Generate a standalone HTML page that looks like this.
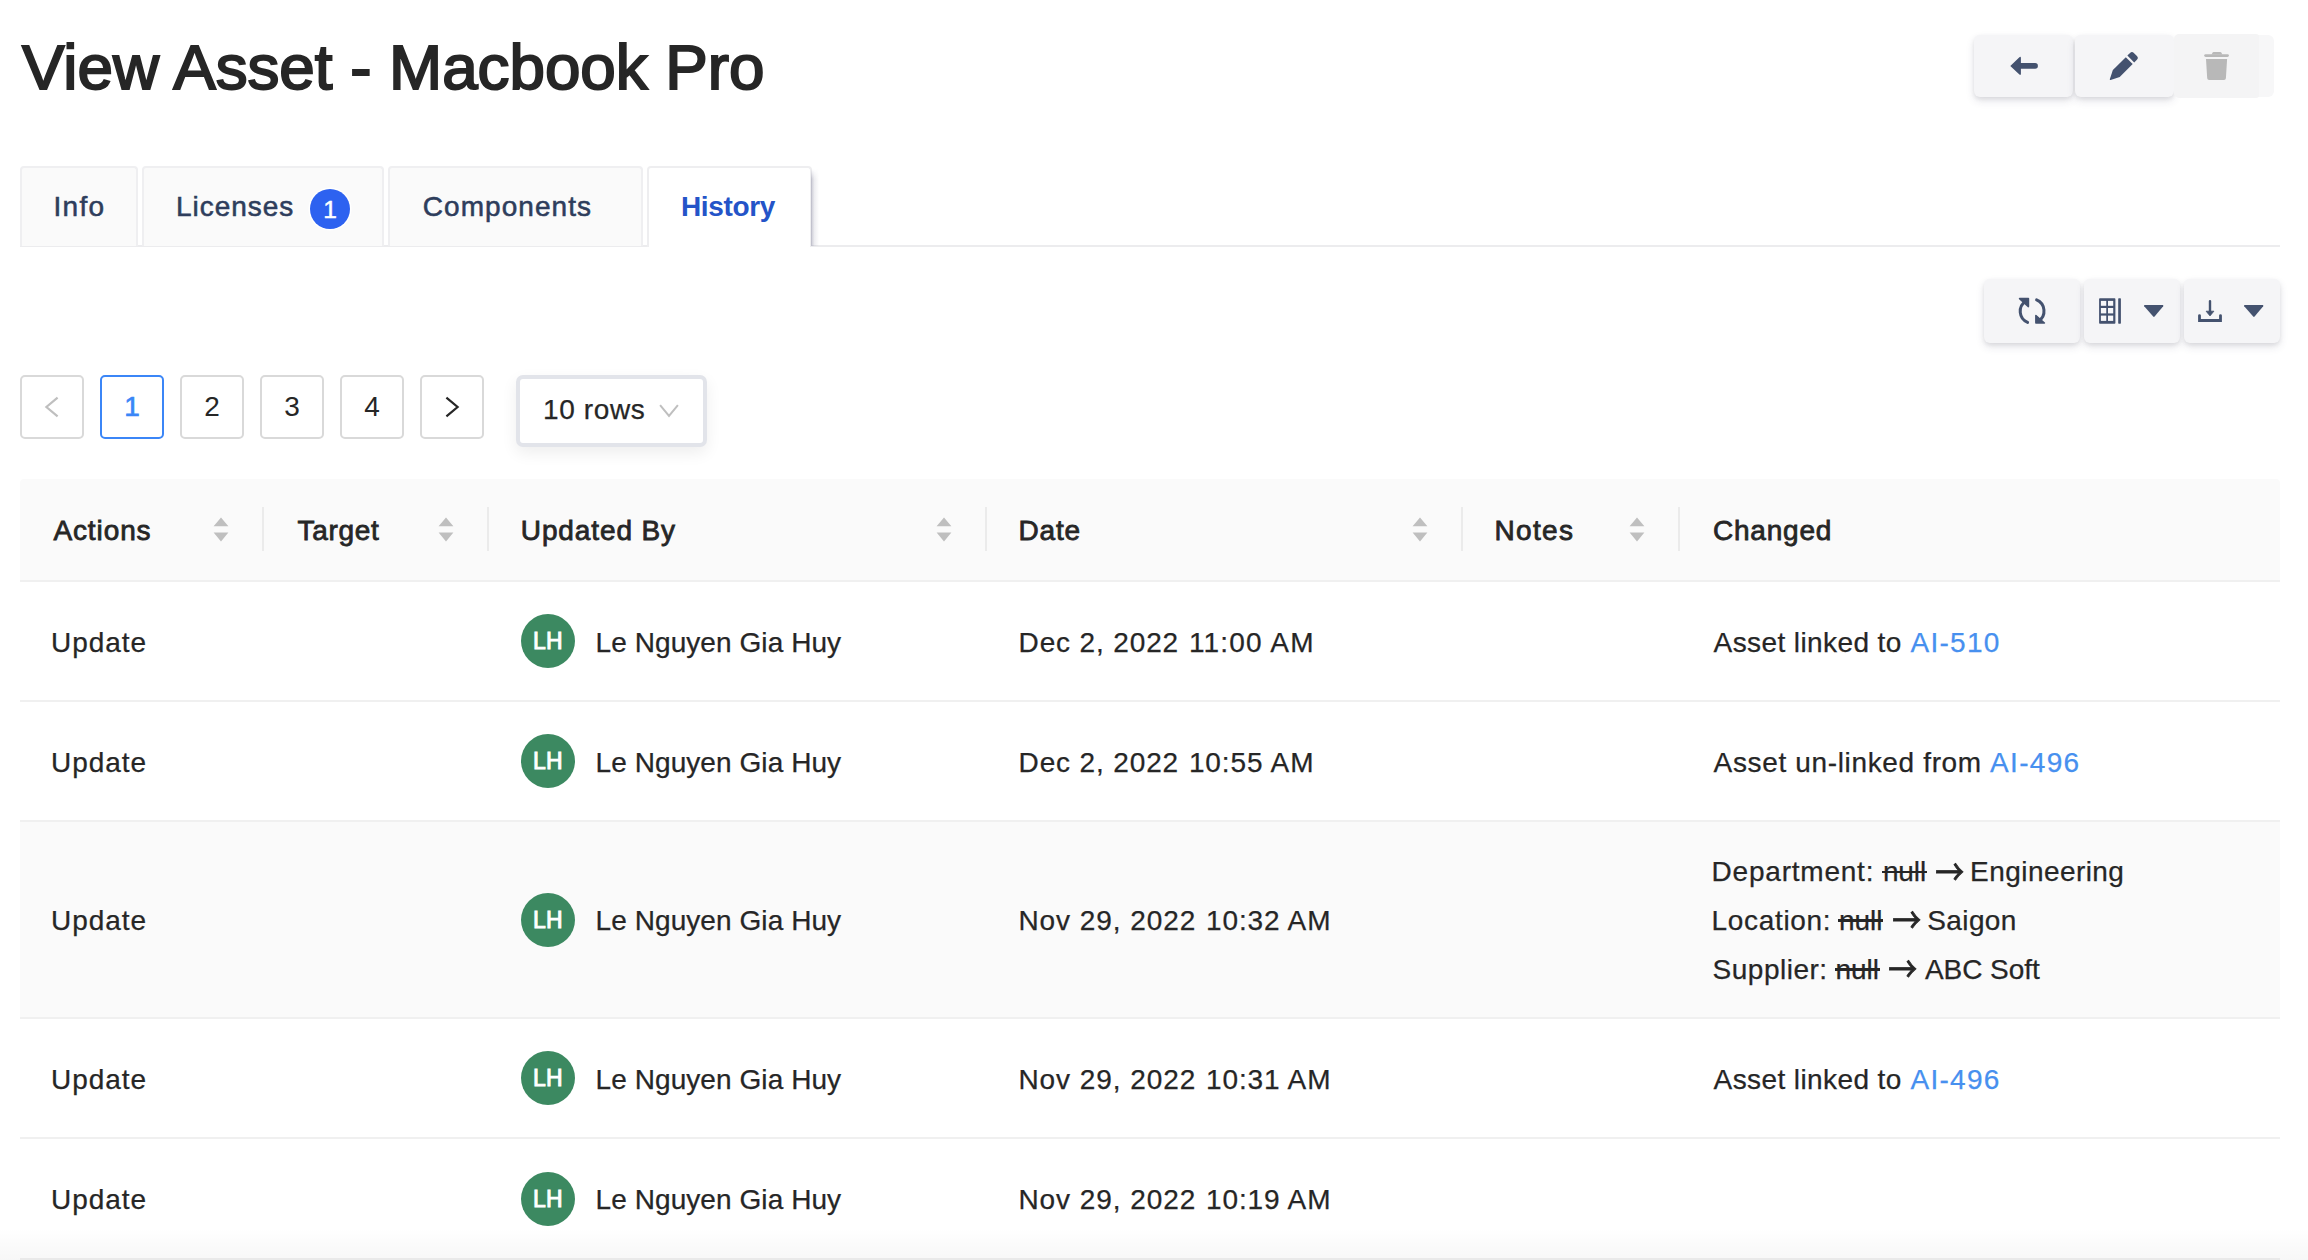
<!DOCTYPE html>
<html lang="en">
<head>
<meta charset="utf-8">
<title>View Asset - Macbook Pro</title>
<style>
*{box-sizing:border-box;margin:0;padding:0}
html,body{width:2308px;height:1260px;overflow:hidden;background:#fff}
body{font-family:"Liberation Sans",sans-serif;color:#262626;font-size:28px;position:relative}
.t{position:absolute;white-space:nowrap;font-size:28px;color:#262626;text-decoration:none;-webkit-text-stroke:.25px currentColor}
s.t{text-decoration:none}
.stk{position:absolute;height:2.3px;background:#262626}
svg.ov{position:absolute;left:0;top:0;width:2308px;height:1260px;pointer-events:none}
/* buttons */
.btn{position:absolute;background:#f5f5f7;border-radius:6px;box-shadow:0 4px 8px rgba(50,50,93,.12),0 2px 4px rgba(0,0,0,.08)}
.btn.flat{box-shadow:none;background:#f5f5f6}
/* tabs */
.tabline{position:absolute;left:20px;width:2260px;top:245px;height:2px;background:#ececee}
.tab{position:absolute;top:166px;height:80px;background:#fafafa;border:2px solid #efeff1;border-bottom:none;border-radius:4px 4px 0 0}
.tab.active{background:#fff;border-color:#eeeef0;height:81px}
.tabsh{position:absolute;left:811px;top:169px;width:8px;height:77px;background:linear-gradient(to right,rgba(120,120,145,.42),rgba(120,120,145,.12) 45%,rgba(120,120,145,0));-webkit-mask-image:linear-gradient(to bottom,transparent,#000 10px);mask-image:linear-gradient(to bottom,transparent,#000 10px)}
.badge{position:absolute;left:310px;top:189px;width:40px;height:40px;border-radius:20px;background:#2d62f0;color:#fff;font-size:24.5px;line-height:41px;text-align:center;-webkit-text-stroke:.5px #fff;box-shadow:0 0 0 1.5px #fff}
/* pagination */
.pg{position:absolute;top:375px;width:64px;height:64px;border:2px solid #d9d9d9;border-radius:5px;background:#fff;text-align:center;line-height:59px;font-size:28px;color:#262626}
.pg.act{border-color:#3b86f7;color:#3b86f7;-webkit-text-stroke:.7px #3b86f7}
.sel{position:absolute;left:516px;top:375px;width:191px;height:71.5px;border:4px solid #e2e4ea;border-radius:7px;background:#fff;box-shadow:0 6px 16px rgba(0,0,0,.07)}
/* table */
.thead{position:absolute;left:20px;top:479px;width:2260px;height:103px;background:#fafafa;border-bottom:2px solid #f0f0f0;border-radius:4px 4px 0 0}
.sep{position:absolute;top:507px;width:2px;height:44px;background:#ebebeb}
.row{position:absolute;left:20px;width:2260px;border-bottom:2px solid #f0f0f0}
.row.hov{background:#fafafa}
.av{position:absolute;left:521px;width:54px;height:54px;border-radius:27px;background:#3c8961;color:#fff;font-size:23px;text-align:center;line-height:54px;letter-spacing:.3px;-webkit-text-stroke:.95px #fff}
.fade{position:absolute;left:0;top:1228px;width:2308px;height:32px;background:linear-gradient(to bottom,rgba(0,0,0,0),rgba(0,0,0,.03))}
</style>
</head>
<body>

<!-- top-right buttons -->
<div class="btn" style="left:1974px;top:34.5px;width:99px;height:62.5px"></div>
<div class="btn" style="left:2075px;top:34.5px;width:99px;height:62.5px"></div>
<div class="btn flat" style="left:2174px;top:35px;width:100px;height:62px;background:#f7f7f8"></div>
<div class="btn flat" style="left:2174px;top:34px;width:85px;height:64px;background:#f4f4f5;border-radius:5px 3px 3px 5px"></div>

<!-- tabs -->
<div class="tabline"></div>
<div class="tab" style="left:20px;width:118px"></div>
<div class="tab" style="left:142px;width:242px"></div>
<div class="tab" style="left:388px;width:255px"></div>
<div class="tab active" style="left:647px;width:165px"></div>
<div class="tabsh"></div>
<div class="badge">1</div>

<!-- toolbar -->
<div class="btn" style="left:1984px;top:279px;width:96px;height:64px"></div>
<div class="btn" style="left:2084px;top:279px;width:96px;height:64px"></div>
<div class="btn" style="left:2184px;top:279px;width:96px;height:64px"></div>

<!-- pagination -->
<div class="pg" style="left:20px"></div>
<div class="pg act" style="left:100px">1</div>
<div class="pg" style="left:180px">2</div>
<div class="pg" style="left:260px">3</div>
<div class="pg" style="left:340px">4</div>
<div class="pg" style="left:420px"></div>
<div class="sel"></div>

<!-- table header -->
<div class="thead"></div>
<div class="sep" style="left:262px"></div>
<div class="sep" style="left:487px"></div>
<div class="sep" style="left:985px"></div>
<div class="sep" style="left:1461px"></div>
<div class="sep" style="left:1678px"></div>

<!-- rows -->
<div class="row" style="top:582px;height:120px"></div>
<div class="row" style="top:702px;height:120px"></div>
<div class="row hov" style="top:822px;height:197px"></div>
<div class="row" style="top:1019px;height:120px"></div>
<div class="row" style="top:1139px;height:121px"></div>
<div class="fade"></div>

<div class="av" style="top:614px">LH</div>
<div class="av" style="top:734px">LH</div>
<div class="av" style="top:893px">LH</div>
<div class="av" style="top:1051px">LH</div>
<div class="av" style="top:1171.5px">LH</div>

<!-- icons -->
<svg class="ov" viewBox="0 0 2308 1260">
 <g fill="#44526f" stroke="none">
  <!-- back arrow -->
  <path d="M2010.3,65.9 L2019.4,57.2 Q2020.9,56.2 2020.9,58 L2020.9,63.1 L2035.1,63.1 A2.8,2.8 0 0 1 2035.1,68.7 L2020.9,68.7 L2020.9,73.8 Q2020.9,75.6 2019.4,74.6 Z"/>
  <!-- pencil -->
  <g transform="translate(2110 79.8) rotate(-45)">
   <path d="M0.3,0.6 Q-0.4,0 0.3,-0.6 L8.9,-4.85 L27.2,-4.85 L27.2,4.85 L8.9,4.85 Z"/>
   <path d="M29.4,-4.85 L33.2,-4.85 Q35.9,-4.85 35.9,-2.15 L35.9,2.15 Q35.9,4.85 33.2,4.85 L29.4,4.85 Z"/>
  </g>
  <!-- carets -->
  <path d="M2144.6,305 L2162.8,305 Q2163.8,305.2 2163.2,306.2 L2154.6,316.6 Q2153.9,317.3 2153.2,316.6 L2144.2,306.2 Q2143.6,305.2 2144.6,305 Z"/>
  <path d="M2244.6,305 L2262.8,305 Q2263.8,305.2 2263.2,306.2 L2254.6,316.6 Q2253.9,317.3 2253.2,316.6 L2244.2,306.2 Q2243.6,305.2 2244.6,305 Z"/>
  <!-- columns grid -->
  <rect x="2099.1" y="298.3" width="16.3" height="25.4" rx="0.8"/>
  <rect x="2118.2" y="298.3" width="2.7" height="25.4" rx="0.6"/>
  <!-- refresh arrow heads -->
  <path d="M2019.6,298.6 L2028.4,298.6 L2028.4,306.6 Z" stroke="#44526f" stroke-width="1.6" stroke-linejoin="round"/>
  <path d="M2035.9,315.6 L2035.9,323 L2044.4,323 Z" stroke="#44526f" stroke-width="1.6" stroke-linejoin="round"/>
  <!-- download arrow head -->
  <path d="M2206.1,311.2 L2213.9,311.2 L2210,315.9 Z" stroke="#44526f" stroke-width="0.8" stroke-linejoin="round"/>
 </g>
 <g fill="#f7f7f9">
  <rect x="2100.9" y="300.9" width="5.35" height="4.9"/><rect x="2108" y="300.9" width="5.2" height="4.9"/>
  <rect x="2100.9" y="308" width="5.35" height="5.4"/><rect x="2108" y="308" width="5.2" height="5.4"/>
  <rect x="2100.9" y="315.6" width="5.35" height="5.3"/><rect x="2108" y="315.6" width="5.2" height="5.3"/>
 </g>
 <g fill="none" stroke="#44526f" stroke-linecap="round">
  <!-- refresh arcs -->
  <path d="M2027.6,322.4 A12,12 0 0 1 2025.6,301.3" stroke-width="3"/>
  <path d="M2036.6,299.9 A12,12 0 0 1 2038.6,321" stroke-width="3"/>
  <!-- download -->
  <path d="M2210,301.1 L2210,312" stroke-width="2.4"/>
  <path d="M2199.5,315.6 L2199.5,320.5 L2220.5,320.5 L2220.5,315.6" stroke-width="2.8" stroke-linejoin="miter"/>
 </g>
 <!-- trash -->
 <g fill="#b8b8b8">
  <rect x="2204.2" y="54.2" width="24.7" height="2.8" rx="1.4"/>
  <path d="M2211.6,54.6 L2212.6,52.6 Q2212.9,52 2213.6,52 L2220.3,52 Q2221,52 2221.3,52.6 L2222.3,54.6 Z"/>
  <path d="M2206,59.1 L2227.1,59.1 L2225.9,78.2 Q2225.8,80 2224,80 L2209.1,80 Q2207.3,80 2207.2,78.2 Z"/>
 </g>
 <!-- pagination chevrons -->
 <g fill="none" stroke-width="2.2" stroke-linecap="butt" stroke-linejoin="miter">
  <path d="M57.6,397.6 L46.4,407 L57.6,416.4" stroke="#bfbfbf"/>
  <path d="M446.4,397.6 L457.6,407 L446.4,416.4" stroke="#262626"/>
  <path d="M660.1,405.2 L669,416 L677.9,405.2" stroke="#bfbfbf" stroke-width="2"/>
 </g>
 <!-- sort icons -->
 <g fill="#bfbfbf">
  <path d="M213.6,526.3 L221.0,517.5 L228.4,526.3 Z M213.6,532.6 L228.4,532.6 L221.0,541.4 Z"/>
  <path d="M438.6,526.3 L446.0,517.5 L453.4,526.3 Z M438.6,532.6 L453.4,532.6 L446.0,541.4 Z"/>
  <path d="M936.6,526.3 L944.0,517.5 L951.4,526.3 Z M936.6,532.6 L951.4,532.6 L944.0,541.4 Z"/>
  <path d="M1412.6,526.3 L1420.0,517.5 L1427.4,526.3 Z M1412.6,532.6 L1427.4,532.6 L1420.0,541.4 Z"/>
  <path d="M1629.6,526.3 L1637.0,517.5 L1644.4,526.3 Z M1629.6,532.6 L1644.4,532.6 L1637.0,541.4 Z"/>
 </g>
</svg>

<span class="t" style="left:22.0px;top:27.3px;line-height:80px;font-size:63.8px;letter-spacing:-0.04px;-webkit-text-stroke:2.0px currentColor;">View Asset - Macbook Pro</span>
<span class="t" style="left:53.5px;top:188.6px;line-height:35px;letter-spacing:1.31px;color:#2e3d5c;-webkit-text-stroke:0.55px currentColor;">Info</span>
<span class="t" style="left:176.0px;top:188.6px;line-height:35px;letter-spacing:0.95px;color:#2e3d5c;-webkit-text-stroke:0.55px currentColor;">Licenses</span>
<span class="t" style="left:422.8px;top:188.6px;line-height:35px;letter-spacing:1.05px;color:#2e3d5c;-webkit-text-stroke:0.55px currentColor;">Components</span>
<span class="t" style="left:681.0px;top:188.6px;line-height:35px;letter-spacing:-0.37px;font-weight:700;color:#2454c8;-webkit-text-stroke:0px currentColor;">History</span>
<span class="t" style="left:543.0px;top:391.9px;line-height:35px;letter-spacing:0.63px;">10 rows</span>
<span class="t" style="left:53.4px;top:512.8px;line-height:35px;letter-spacing:0.90px;-webkit-text-stroke:0.8px currentColor;">Actions</span>
<span class="t" style="left:297.6px;top:512.8px;line-height:35px;letter-spacing:0.69px;-webkit-text-stroke:0.8px currentColor;">Target</span>
<span class="t" style="left:520.8px;top:512.8px;line-height:35px;letter-spacing:0.89px;-webkit-text-stroke:0.8px currentColor;">Updated By</span>
<span class="t" style="left:1018.6px;top:512.8px;line-height:35px;letter-spacing:0.81px;-webkit-text-stroke:0.8px currentColor;">Date</span>
<span class="t" style="left:1494.6px;top:512.8px;line-height:35px;letter-spacing:1.31px;-webkit-text-stroke:0.8px currentColor;">Notes</span>
<span class="t" style="left:1712.9px;top:512.8px;line-height:35px;letter-spacing:0.80px;-webkit-text-stroke:0.8px currentColor;">Changed</span>
<span class="t" style="left:51.1px;top:624.8px;line-height:35px;letter-spacing:0.93px;">Update</span>
<span class="t" style="left:595.6px;top:624.8px;line-height:35px;letter-spacing:0.07px;">Le Nguyen Gia Huy</span>
<span class="t" style="left:1018.6px;top:624.8px;line-height:35px;letter-spacing:0.86px;">Dec 2, 2022</span>
<span class="t" style="left:1188.9px;top:624.8px;line-height:35px;letter-spacing:1.20px;">11:00 AM</span>
<span class="t" style="left:51.1px;top:744.8px;line-height:35px;letter-spacing:0.93px;">Update</span>
<span class="t" style="left:595.6px;top:744.8px;line-height:35px;letter-spacing:0.07px;">Le Nguyen Gia Huy</span>
<span class="t" style="left:1018.6px;top:744.8px;line-height:35px;letter-spacing:0.86px;">Dec 2, 2022</span>
<span class="t" style="left:1188.9px;top:744.8px;line-height:35px;letter-spacing:0.90px;">10:55 AM</span>
<span class="t" style="left:51.1px;top:902.7px;line-height:35px;letter-spacing:0.93px;">Update</span>
<span class="t" style="left:595.6px;top:902.7px;line-height:35px;letter-spacing:0.07px;">Le Nguyen Gia Huy</span>
<span class="t" style="left:1018.4px;top:902.7px;line-height:35px;letter-spacing:0.95px;">Nov 29, 2022</span>
<span class="t" style="left:1206.0px;top:902.7px;line-height:35px;letter-spacing:0.88px;">10:32 AM</span>
<span class="t" style="left:51.1px;top:1062.0px;line-height:35px;letter-spacing:0.93px;">Update</span>
<span class="t" style="left:595.6px;top:1062.0px;line-height:35px;letter-spacing:0.07px;">Le Nguyen Gia Huy</span>
<span class="t" style="left:1018.4px;top:1062.0px;line-height:35px;letter-spacing:0.95px;">Nov 29, 2022</span>
<span class="t" style="left:1206.0px;top:1062.0px;line-height:35px;letter-spacing:0.88px;">10:31 AM</span>
<span class="t" style="left:51.1px;top:1182.0px;line-height:35px;letter-spacing:0.93px;">Update</span>
<span class="t" style="left:595.6px;top:1182.0px;line-height:35px;letter-spacing:0.07px;">Le Nguyen Gia Huy</span>
<span class="t" style="left:1018.4px;top:1182.0px;line-height:35px;letter-spacing:0.95px;">Nov 29, 2022</span>
<span class="t" style="left:1206.0px;top:1182.0px;line-height:35px;letter-spacing:0.88px;">10:19 AM</span>
<span class="t" style="left:1713.6px;top:624.8px;line-height:35px;letter-spacing:0.40px;">Asset linked to</span>
<a class="t a" style="left:1910.4px;top:624.8px;line-height:35px;letter-spacing:1.31px;color:#4790ef;">AI-510</a>
<span class="t" style="left:1713.6px;top:744.8px;line-height:35px;letter-spacing:0.65px;">Asset un-linked from</span>
<a class="t a" style="left:1990.1px;top:744.8px;line-height:35px;letter-spacing:1.31px;color:#4790ef;">AI-496</a>
<span class="t" style="left:1713.6px;top:1062.0px;line-height:35px;letter-spacing:0.40px;">Asset linked to</span>
<a class="t a" style="left:1910.4px;top:1062.0px;line-height:35px;letter-spacing:1.31px;color:#4790ef;">AI-496</a>
<span class="t" style="left:1711.6px;top:853.8px;line-height:35px;letter-spacing:0.78px;">Department:</span>
<s class="t s" style="left:1882.9px;top:853.8px;line-height:35px;letter-spacing:-0.11px;">null</s>
<span class="t" style="left:1934.7px;top:847.5px;line-height:44px;font-size:35.2px;font-family:'Noto Sans CJK SC',sans-serif;transform:scaleX(0.8182);transform-origin:1.00px 50%;-webkit-text-stroke:0.9px currentColor;">→</span>
<span class="t" style="left:1970.1px;top:853.8px;line-height:35px;letter-spacing:0.44px;">Engineering</span>
<span class="t" style="left:1711.6px;top:902.7px;line-height:35px;letter-spacing:0.67px;">Location:</span>
<s class="t s" style="left:1839.1px;top:902.7px;line-height:35px;letter-spacing:-0.11px;">null</s>
<span class="t" style="left:1891.5px;top:896.4px;line-height:44px;font-size:35.2px;font-family:'Noto Sans CJK SC',sans-serif;transform:scaleX(0.8182);transform-origin:1.00px 50%;-webkit-text-stroke:0.9px currentColor;">→</span>
<span class="t" style="left:1927.3px;top:902.7px;line-height:35px;letter-spacing:0.37px;">Saigon</span>
<span class="t" style="left:1712.6px;top:951.5px;line-height:35px;letter-spacing:0.50px;">Supplier:</span>
<s class="t s" style="left:1835.6px;top:951.5px;line-height:35px;letter-spacing:-0.11px;">null</s>
<span class="t" style="left:1887.5px;top:945.2px;line-height:44px;font-size:35.2px;font-family:'Noto Sans CJK SC',sans-serif;transform:scaleX(0.8182);transform-origin:1.00px 50%;-webkit-text-stroke:0.9px currentColor;">→</span>
<span class="t" style="left:1924.9px;top:951.5px;line-height:35px;letter-spacing:-0.03px;">ABC Soft</span>
<i class="stk" style="left:1882.0px;top:870.55px;width:44.9px"></i>
<i class="stk" style="left:1838.2px;top:919.45px;width:44.9px"></i>
<i class="stk" style="left:1834.7px;top:968.25px;width:44.9px"></i>
</body>
</html>
